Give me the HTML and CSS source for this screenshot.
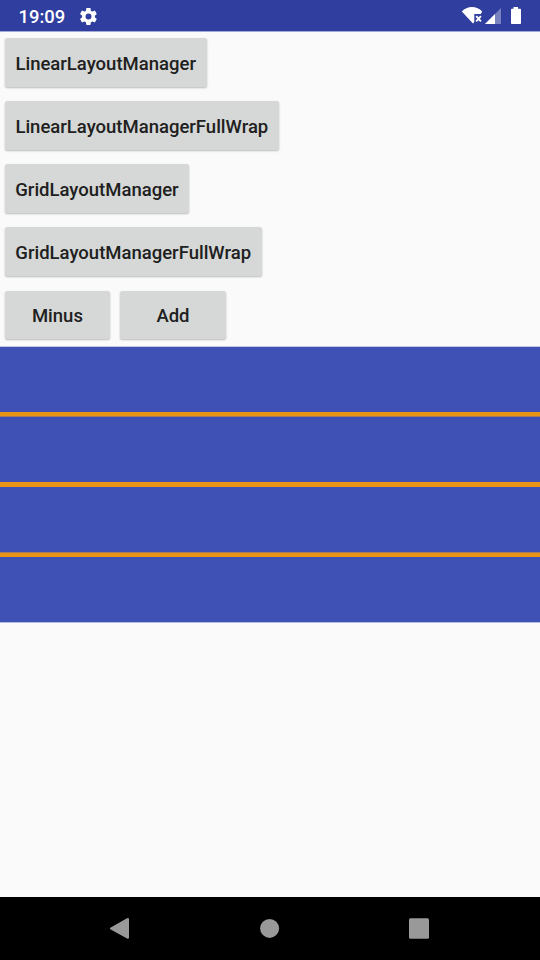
FILE: index.html
```
<!DOCTYPE html>
<html lang="en">
<head>
<meta charset="utf-8">
<title>Layout managers</title>
<link rel="stylesheet" href="styles.css">
</head>
<body>
<header class="status">
  <span class="time">19:09</span>
  <svg class="gear" viewBox="2 2 20 20" width="17" height="17"><path fill="#fff" d="M19.4 13c.1-.3.1-.6.1-1s0-.7-.1-1l2.1-1.600c.2-.2.3-.4.1-.7l-2-3.400c-.1-.3-.4-.3-.6-.2l-2.500 1c-.5-.4-1.100-.7-1.700-1l-.4-2.600c0-.3-.2-.5-.5-.5h-4c-.3 0-.4.2-.5.5L9 5.100c-.6.3-1.200.6-1.700 1l-2.500-1c-.2-.1-.5 0-.6.2l-2 3.400c-.1.3 0 .5.2.7L4.500 11c-.1.3-.1.700-.1 1s0 .7.1 1l-2.100 1.600c-.2.2-.3.5-.2.7l2 3.400c.1.300.4.300.6.2l2.500-1c.5.4 1.100.7 1.700 1l.4 2.600c0 .3.200.5.500.5h4c.3 0 .5-.2.500-.5l.4-2.600c.6-.3 1.200-.6 1.700-1l2.500 1c.2.100.5 0 .6-.2l2-3.400c.1-.3.1-.500-.1-.7zM12 15.500a3.500 3.500 0 1 1 0-7 3.500 3.500 0 0 1 0 7z"/></svg>
  <svg class="signals" viewBox="460 4 64 24" width="64" height="24">
    <path fill="#fff" d="M461.800 11.500C464.500 8.700 468 7 472 7s7.500 1.700 10.200 4.500L480.800 14H474.300v8L473 23.400Z"/>
    <path fill="none" stroke="#fff" stroke-width="1.900" d="M476.200 16.200l4.700 5.200m0-5.200l-4.700 5.200"/>
    <path fill="#fff" fill-opacity=".35" d="M501 8v16H485z"/>
    <path fill="#fff" d="M495 14V24H485z"/>
    <path fill="#fff" d="M513.500 7h4.500v1.800h2.200q.8 0 .8.800v13.600q0 .8-.8.800h-8.400q-.8 0-.8-.8V9.600q0-.8.8-.8h1.700z"/>
  </svg>
</header>
<main>
  <div class="row"><button class="w1">LinearLayoutManager</button></div>
  <div class="row"><button class="w2">LinearLayoutManagerFullWrap</button></div>
  <div class="row"><button class="w3">GridLayoutManager</button></div>
  <div class="row"><button class="w4">GridLayoutManagerFullWrap</button></div>
  <div class="row last"><button class="small">Minus</button><button class="small">Add</button></div>
  <div class="list">
    <div class="item"></div>
    <div class="divider soft-bottom"></div>
    <div class="item"></div>
    <div class="divider"></div>
    <div class="item"></div>
    <div class="divider soft-top"></div>
    <div class="item"></div>
  </div>
</main>
<nav class="nav">
  <svg viewBox="0 0 540 63" width="540" height="63" fill="#999">
    <path d="M110.300 30.700 127 21.200q2-.9 2 1V40.500q0 1.900-2 1L110.300 32.300q-.9-.8 0-1.600z"/>
    <circle cx="269.600" cy="31.400" r="9.500"/>
    <rect x="409" y="21.300" width="20" height="20.400" rx="1.500"/>
  </svg>
</nav>
</body>
</html>
```
FILE: styles.css
```
* { box-sizing: border-box; }
body {
  margin: 0;
  width: 540px;
  height: 960px;
  display: flex;
  flex-direction: column;
  overflow: hidden;
  background: #fafafa;
  font-family: Roboto, sans-serif;
}
.status {
  height: 32px;
  flex: none;
  display: flex;
  align-items: center;
  padding: 0 16px 0 18.600px;
  background: #303f9f;
  border-bottom: 1px solid #a2a9d4;
  color: #fff;
}
.time { font-size: 18.4px; font-weight: 500; line-height: 22px; margin-top: 2px; }
.gear { margin: 1px 0 0 15px; }
.signals { margin-left: auto; }
main { flex: 1; min-height: 0; }
.row {
  height: 63px;
  display: flex;
  gap: 10px;
  padding: 6px 0 0 4.700px;
}
.row.last { height: 62px; padding-top: 7px; }
button {
  height: 49px;
  border: 0;
  padding: 3px 0 0;
  border-radius: 2.600px;
  background: #d6d8d7;
  color: #202020;
  font: 500 18.5px/22px Roboto, sans-serif;
  white-space: nowrap;
  box-shadow: 0 1px 2px rgba(0, 0, 0, .26);
}
.w1 { width: 202px; }
.w2 { width: 274.300px; }
.w3 { width: 184.500px; }
.w4 { width: 257px; }
.small { width: 105.500px; height: 48px; padding-top: 2px; }
.list { border-top: 1px solid #c1c7e5; border-bottom: 1px solid #b3bae0; }
.item { height: 65px; background: #3f51b5; }
.divider { height: 5px; background: #e89417; }
.soft-bottom { border-bottom: 1px solid #a27a61; }
.soft-top { border-top: 1px solid #a27a61; }
.nav { height: 63px; flex: none; background: #000; }
.nav svg { display: block; }
```
